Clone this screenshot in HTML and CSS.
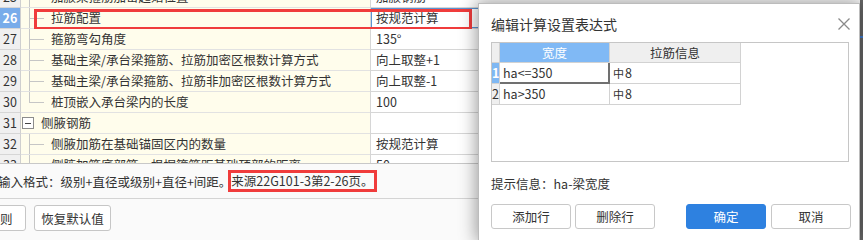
FILE: index.html
```html
<!DOCTYPE html>
<html lang="zh-CN">
<head>
<meta charset="utf-8">
<title>编辑计算设置表达式</title>
<link rel="stylesheet" href="styles.css">
</head>
<body>
<div class="app">
  <div class="main">
    <div class="grid">
      <div class="rows">
        <div class="row">
          <div class="num">25</div>
          <div class="tree"><span class="branch"></span><span class="label">加腋梁箍筋加密起始位置</span></div>
          <div class="val">加腋钢筋</div>
        </div>
        <div class="row">
          <div class="num sel">26</div>
          <div class="tree"><span class="branch"></span><span class="label">拉筋配置</span></div>
          <div class="val active">按规范计算</div>
          <div class="hl"></div>
        </div>
        <div class="row">
          <div class="num">27</div>
          <div class="tree"><span class="branch"></span><span class="label">箍筋弯勾角度</span></div>
          <div class="val">135°</div>
        </div>
        <div class="row">
          <div class="num">28</div>
          <div class="tree"><span class="branch"></span><span class="label">基础主梁/承台梁箍筋、拉筋加密区根数计算方式</span></div>
          <div class="val">向上取整+1</div>
        </div>
        <div class="row">
          <div class="num">29</div>
          <div class="tree"><span class="branch"></span><span class="label">基础主梁/承台梁箍筋、拉筋非加密区根数计算方式</span></div>
          <div class="val">向上取整-1</div>
        </div>
        <div class="row">
          <div class="num">30</div>
          <div class="tree"><span class="branch last"></span><span class="label">桩顶嵌入承台梁内的长度</span></div>
          <div class="val">100</div>
        </div>
        <div class="row">
          <div class="num">31</div>
          <div class="tree group"><span class="toggle"></span><span class="label">侧腋钢筋</span></div>
          <div class="val"></div>
        </div>
        <div class="row">
          <div class="num">32</div>
          <div class="tree"><span class="branch"></span><span class="label">侧腋加筋在基础锚固区内的数量</span></div>
          <div class="val">按规范计算</div>
        </div>
        <div class="row partial">
          <div class="num">33</div>
          <div class="tree"><span class="branch"></span><span class="label">侧腋加筋底部筋、根据箍筋距基础顶部的距离</span></div>
          <div class="val">50</div>
        </div>
      </div>
    </div>
    <div class="info"><span class="info-text">输入格式：级别+直径或级别+直径+间距。</span><span class="mark">来源22G101-3第2-26页。</span></div>
    <div class="actions">
      <button class="btn btn-cut">导出规则</button>
      <button class="btn">恢复默认值</button>
    </div>
  </div>
  <div class="edge"></div>
</div>

<div class="dialog">
  <div class="dlg-head">
    <span class="dlg-title">编辑计算设置表达式</span>
    <svg class="close" width="12" height="12" viewBox="0 0 12 12"><path d="M0.5 0.5 L11.5 11.5 M11.5 0.5 L0.5 11.5" stroke="#8a8a8a" stroke-width="1.3" fill="none"/></svg>
  </div>
  <div class="table-box">
    <div class="tbl">
      <div class="corner"></div>
      <div class="hcell on">宽度</div>
      <div class="hcell">拉筋信息</div>
      <div class="rh on">1</div>
      <div class="cell edit">ha&lt;=350</div>
      <div class="cell"><span class="sym">中</span>8</div>
      <div class="rh">2</div>
      <div class="cell">ha&gt;350</div>
      <div class="cell"><span class="sym">中</span>8</div>
    </div>
  </div>
  <div class="hint">提示信息：ha-梁宽度</div>
  <div class="dlg-actions">
    <button class="dbtn">添加行</button>
    <button class="dbtn gap-s">删除行</button>
    <button class="dbtn primary push">确定</button>
    <button class="dbtn gap-m">取消</button>
  </div>
</div>
</body>
</html>
```

FILE: styles.css
```css
* { box-sizing: border-box; }
html, body { margin: 0; padding: 0; }
body {
  width: 863px;
  height: 240px;
  overflow: hidden;
  position: relative;
  font-family: "Noto Sans CJK SC", "Noto Sans", sans-serif;
  font-size: 12.5px;
  color: #333;
  background: #fafafa;
}

.app { display: flex; height: 240px; }
.main { flex: 1; min-width: 0; display: flex; flex-direction: column; }
.edge {
  width: 3px;
  background: linear-gradient(to bottom, #6a6a6a 0 36px, #3f7fd6 36px 38px, #6a6a6a 38px);
}

/* background property grid */
.grid {
  height: 164px;
  overflow: hidden;
  background: #fff;
  border-bottom: 1px solid #c8c8c8;
}
.rows { margin-top: -13px; }
.row {
  display: grid;
  grid-template-columns: 21px 349px 1fr;
  height: 21px;
  position: relative;
}
.row.partial { height: 8px; overflow: hidden; }
.num {
  background: #f0f0f0;
  border-right: 1px solid #cfcfcf;
  border-bottom: 1px solid #d6d6d6;
  text-align: center;
  line-height: 20px;
  color: #333;
}
.num.sel { background: #78acea; color: #fff; font-weight: bold; }
.tree {
  background: #fffdec;
  border-bottom: 1px solid #e2e2e2;
  display: flex;
  align-items: stretch;
  padding-left: 8px;
  white-space: nowrap;
  overflow: hidden;
  line-height: 20px;
}
.row.partial .num,
.row.partial .tree,
.row.partial .val { height: 21px; }
.tree.group { padding-left: 1px; }
.branch {
  flex: none;
  width: 15px;
  margin-right: 7px;
  background:
    linear-gradient(#c6c6c6, #c6c6c6) left top / 1px 100% no-repeat,
    linear-gradient(#c6c6c6, #c6c6c6) left 10px / 100% 1px no-repeat;
}
.branch.last {
  background:
    linear-gradient(#c6c6c6, #c6c6c6) left top / 1px 11px no-repeat,
    linear-gradient(#c6c6c6, #c6c6c6) left 10px / 100% 1px no-repeat;
}
.toggle {
  flex: none;
  align-self: center;
  width: 12px;
  height: 12px;
  margin-right: 7px;
  border: 1px solid #8c8c8c;
  background: #fff linear-gradient(#444, #444) center / 6px 1px no-repeat;
}
.val {
  background: #fff;
  border-left: 1px solid #d6d6d6;
  border-bottom: 1px solid #d6d6d6;
  padding-left: 5px;
  line-height: 20px;
  white-space: nowrap;
}
.val.active { box-shadow: inset 0 0 0 1px #5b93d3; }
.hl {
  position: absolute;
  left: 34px;
  top: 1px;
  width: 438px;
  height: 21px;
  border: 3px solid #f03c3c;
  pointer-events: none;
}

.info {
  height: 35px;
  border-bottom: 1px solid #d4d4d4;
  display: flex;
  align-items: center;
  white-space: nowrap;
}
.info-text { margin-left: -2px; }
.mark {
  display: inline-block;
  line-height: 16px;
  outline: 3px solid #f03c3c;
}

.actions { display: flex; gap: 8px; padding-top: 6px; }
.btn {
  width: 77px;
  height: 26px;
  padding: 0;
  border: 1px solid #c6c6c6;
  border-radius: 3px;
  background: #fff;
  font: inherit;
  color: #333;
}
.btn-cut { margin-left: -51px; }

/* dialog */
.dialog {
  position: absolute;
  left: 478px;
  top: 3px;
  width: 382px;
  height: 237px;
  background: #fff;
  border: 1px solid #bcbcbc;
  border-bottom: none;
  box-shadow: 0 0 16px 2px rgba(0, 0, 0, 0.38);
  padding: 0 8px 0 12px;
  display: flex;
  flex-direction: column;
}
.dlg-head {
  height: 38px;
  display: flex;
  align-items: center;
  justify-content: space-between;
  padding-top: 1px;
}
.dlg-title { font-size: 14px; color: #333; }
.close { margin-right: 1px; }

.table-box {
  height: 120px;
  margin-right: 2px;
  border: 1px solid #c6c6c6;
}
.tbl {
  display: grid;
  grid-template-columns: 8px 110px 131px;
  grid-template-rows: 20px 21px 21px;
}
.tbl > div {
  border-right: 1px solid #d2d2d2;
  border-bottom: 1px solid #d2d2d2;
  line-height: 20px;
  white-space: nowrap;
}
.corner, .rh { background: #efefef; text-align: center; }
.rh.on { background: #7fb8f3; color: #fff; font-weight: bold; }
.hcell { background: #efefef; text-align: center; color: #333; }
.hcell.on { background: #80b9f5; color: #fff; }
.cell { padding-left: 3px; background: #fff; overflow: hidden; }
.tbl > .cell.edit {
  border-right: 2px solid #707070;
  border-bottom: 2px solid #707070;
  line-height: 19px;
}
.sym { font-size: 11px; margin-right: 1px; }

.hint {
  height: 42px;
  display: flex;
  align-items: center;
}
.dlg-actions { display: flex; }
.dbtn {
  width: 80px;
  height: 25px;
  padding: 0;
  border: 1px solid #c8c8c8;
  border-radius: 3px;
  background: #fff;
  font: inherit;
  color: #333;
}
.gap-s { margin-left: 4px; }
.gap-m { margin-left: 5px; }
.push { margin-left: auto; }
.dbtn.primary { background: #2e81e0; border-color: #2e81e0; color: #fff; }
```
